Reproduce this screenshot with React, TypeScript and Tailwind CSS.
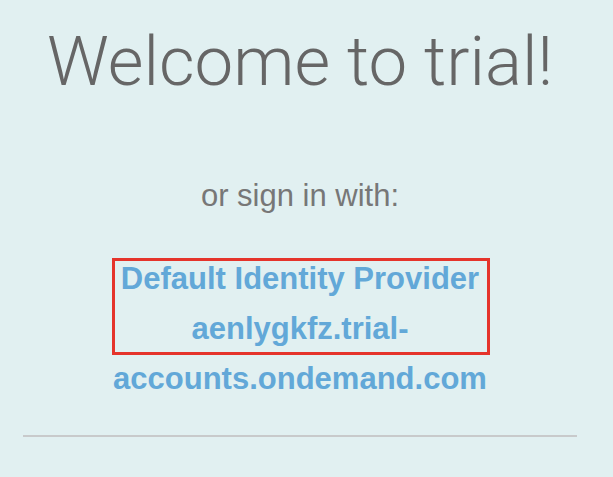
import React from 'react';

const App: React.FC = () => {
    return (
        <div className="min-h-screen bg-[#e1f0f1] pl-[23px] pr-[36px] pt-[27px] font-['Liberation_Sans',Arial,sans-serif]">

            {/* Heading */}
            <h1 className="text-center text-[69px] leading-none font-light text-[#666666] font-['Roboto','Liberation_Sans',sans-serif]">
                Welcome to trial!
            </h1>

            {/* Alternative sign-in */}
            <p className="mt-[84px] text-center text-[31px] leading-none text-[#777777]">
                or sign in with:
            </p>

            <div className="relative mx-auto mt-[43px] w-[378px]">
                <a href="#" className="block text-center text-[31px] leading-[50px] font-bold text-[#62a8d8]">
                    Default Identity Provider aenlygkfz.trial-accounts.ondemand.com
                </a>
                {/* Highlight annotation */}
                <div className="absolute left-[1px] top-[4px] w-[378px] h-[97px] border-[3px] border-[#e5342b] pointer-events-none" />
            </div>

            <hr className="mt-[31px] border-0 border-t-2 border-[#c8cacb]" />
        </div>
    );
};

export default App;
